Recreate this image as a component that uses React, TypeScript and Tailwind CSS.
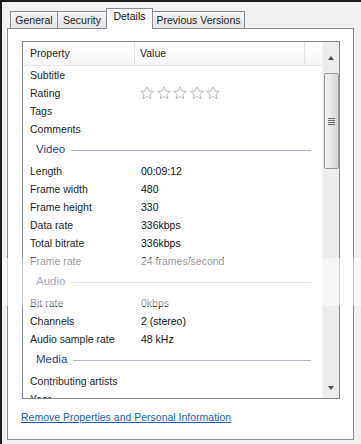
import React from 'react';

type Row =
  | { kind: 'prop'; name: string; value?: string; stars?: boolean }
  | { kind: 'group'; name: string };

const rows: Row[] = [
  { kind: 'prop', name: 'Subtitle' },
  { kind: 'prop', name: 'Rating', stars: true },
  { kind: 'prop', name: 'Tags' },
  { kind: 'prop', name: 'Comments' },
  { kind: 'group', name: 'Video' },
  { kind: 'prop', name: 'Length', value: '00:09:12' },
  { kind: 'prop', name: 'Frame width', value: '480' },
  { kind: 'prop', name: 'Frame height', value: '330' },
  { kind: 'prop', name: 'Data rate', value: '336kbps' },
  { kind: 'prop', name: 'Total bitrate', value: '336kbps' },
  { kind: 'prop', name: 'Frame rate', value: '24 frames/second' },
  { kind: 'group', name: 'Audio' },
  { kind: 'prop', name: 'Bit rate', value: '0kbps' },
  { kind: 'prop', name: 'Channels', value: '2 (stereo)' },
  { kind: 'prop', name: 'Audio sample rate', value: '48 kHz' },
  { kind: 'group', name: 'Media' },
  { kind: 'prop', name: 'Contributing artists' },
  { kind: 'prop', name: 'Year' },
];

const Star = () => (
  <svg width="14" height="14" viewBox="0 0 14 14" className="shrink-0">
    <polygon
      points="7,0.8 8.8,5 13.3,5.3 9.9,8.2 10.9,12.8 7,10.4 3.1,12.8 4.1,8.2 0.7,5.3 5.2,5"
      fill="#fff"
      stroke="#b9b9b9"
      strokeWidth="1"
      strokeLinejoin="round"
    />
  </svg>
);

const Tab = ({ label, active }: { label: string; active?: boolean }) =>
  active ? (
    <div className="relative z-10 -mb-px h-[21px] w-[47px] -mx-px bg-white border border-b-0 border-[#898c95] flex items-start justify-center pt-[2px] text-[#111]">
      {label}
    </div>
  ) : (
    <div className="h-[17px] border border-b-0 border-[#898c95] bg-gradient-to-b from-[#f5f5f5] to-[#e3e3e3] flex items-center justify-center text-[#222]">
      {label}
    </div>
  );

const App = () => {
  return (
    <div
      className="relative w-[361px] h-[444px] overflow-hidden bg-[#f0f0f0] border-t-2 border-l-2 border-[#1c1c1c] text-[10.5px] leading-none"
      style={{ fontFamily: '"Liberation Sans", Arial, sans-serif' }}
    >
      {/* tab strip */}
      <div className="mt-[6px] ml-[8px] flex items-end h-[20px]">
        <div className="w-[48px]">
          <Tab label="General" />
        </div>
        <div className="w-[50px] -ml-px">
          <Tab label="Security" />
        </div>
        <Tab label="Details" active />
        <div className="w-[93px]">
          <Tab label="Previous Versions" />
        </div>
      </div>

      {/* tab page */}
      <div className="ml-[5px] w-[347px] h-[412px] bg-white border border-[#898c95] pt-[12px] pl-[14px]">
        <div className="w-[318px] h-[358px] border border-[#828790] flex">
          {/* list */}
          <div className="w-[299px] h-full overflow-hidden">
            <div className="h-[24px] flex items-center border-b border-[#e5e5e5] bg-gradient-to-b from-white to-[#f5f6f7] text-[#1e1e1e]">
              <div className="w-[112px] h-full flex items-center pl-[7px] border-r border-[#e2e3e5]">Property</div>
              <div className="w-[170px] h-full flex items-center pl-[5px] border-r border-[#e2e3e5]">Value</div>
            </div>
            {rows.map((r) =>
              r.kind === 'group' ? (
                <div key={r.name} className="h-[24px] flex items-center pl-[13px] pr-[11px] gap-[6px]">
                  <span className="text-[#2b3f8c] text-[11.5px]">{r.name}</span>
                  <div className="flex-1 h-px bg-[#b3bccd]" />
                </div>
              ) : (
                <div key={r.name} className="h-[18px] flex items-center">
                  <div className="w-[118px] pl-[7px] text-[#1e1e1e] whitespace-nowrap">{r.name}</div>
                  <div className="flex-1 text-[#111] whitespace-nowrap">
                    {r.stars ? (
                      <div className="flex gap-[2.5px] -ml-[1px]">
                        <Star />
                        <Star />
                        <Star />
                        <Star />
                        <Star />
                      </div>
                    ) : (
                      r.value
                    )}
                  </div>
                </div>
              )
            )}
          </div>

          {/* scrollbar */}
          <div className="w-[17px] h-full bg-[#ececec] border-l border-[#f4f4f4] flex flex-col items-center">
            <div className="h-[31px] w-full flex items-center justify-center">
              <div className="w-0 h-0 border-l-[3.5px] border-r-[3.5px] border-b-[4px] border-l-transparent border-r-transparent border-b-[#4a4a4a]" />
            </div>
            <div className="w-[15px] h-[96px] rounded-[2px] border border-[#979797] bg-gradient-to-r from-[#f4f4f4] via-[#e4e4e4] to-[#d6d6d6] flex flex-col items-center justify-center gap-[1px]">
              <div className="w-[7px] h-px bg-[#6d6d6d]" />
              <div className="w-[7px] h-px bg-[#6d6d6d]" />
              <div className="w-[7px] h-px bg-[#6d6d6d]" />
              <div className="w-[7px] h-px bg-[#6d6d6d]" />
            </div>
            <div className="flex-1" />
            <div className="h-[20px] w-full flex items-center justify-center">
              <div className="w-0 h-0 border-l-[3.5px] border-r-[3.5px] border-t-[4px] border-l-transparent border-r-transparent border-t-[#4a4a4a]" />
            </div>
          </div>
        </div>

        <div className="mt-[11px] -ml-[1px] leading-[14px]">
          <span className="text-[#1c5fb0] underline underline-offset-[1px] text-[10.5px]">
            Remove Properties and Personal Information
          </span>
        </div>
      </div>

      {/* watermark band over the screenshot */}
      <div className="absolute left-0 top-[256px] w-full h-[48px] bg-white/55 pointer-events-none" />
    </div>
  );
};

export default App;
